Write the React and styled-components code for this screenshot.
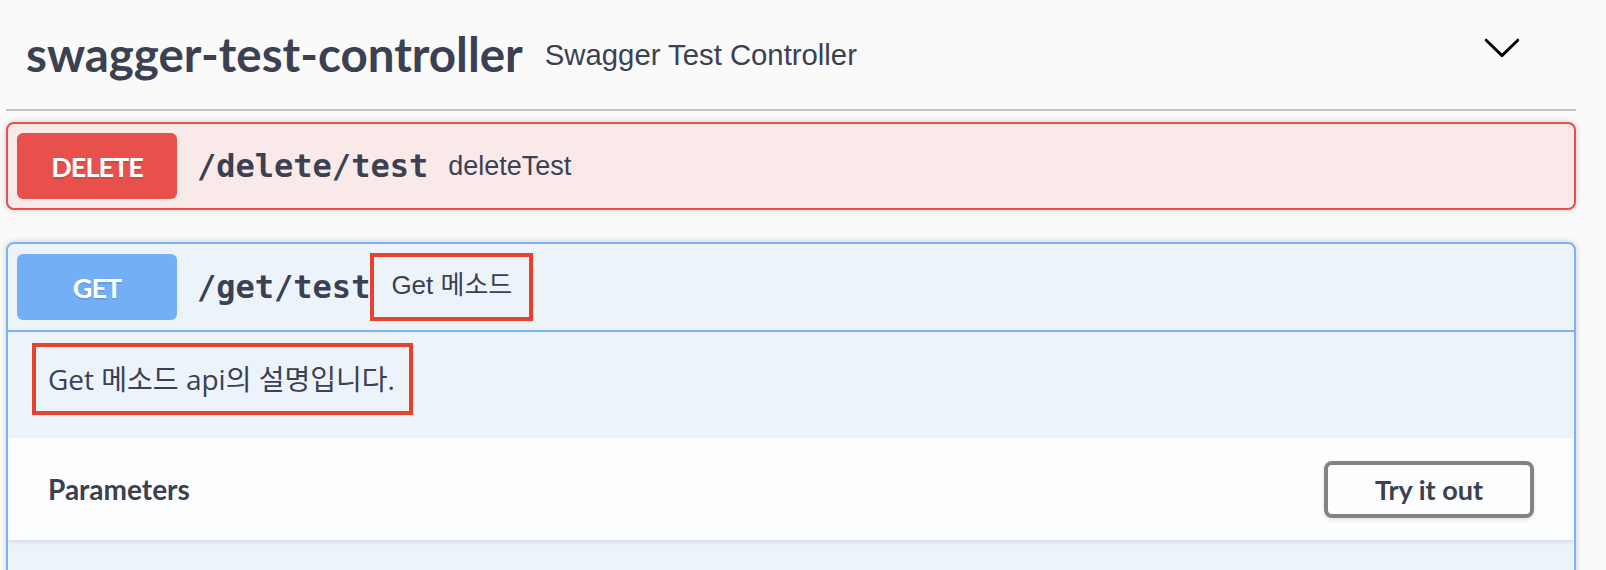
import React from 'react';
import styled, { createGlobalStyle } from 'styled-components';

const GlobalStyle = createGlobalStyle`
  html, body { margin: 0; padding: 0; background: #fafafa; }
  body {
    font-family: "Liberation Sans", "Noto Sans CJK KR", sans-serif;
    color: #3b4151;
  }
  * { box-sizing: border-box; }
`;

const methods = {
  delete: { main: '#e8504b', bg: '#f9e9e9', border: '#e8504b' },
  get: { main: '#73aff7', bg: '#edf3fb', border: '#7cb3f4' },
};

const Page = styled.div`
  height: 570px;
  overflow: hidden;
  padding: 0 30px 0 6px;
`;

const TagHeader = styled.div`
  display: flex;
  align-items: center;
  padding: 25px 54px 26px 20px;
  border-bottom: 2px solid rgba(59, 65, 81, 0.3);
  margin-bottom: 11px;
`;

const TagName = styled.span`
  font-family: Lato, sans-serif;
  font-weight: 700;
  font-size: 47.5px;
  line-height: 58px;
  color: #3b4151;
`;

const TagDescription = styled.small`
  flex: 1;
  margin-left: 22px;
  margin-top: 2px;
  font-family: "Liberation Sans", sans-serif;
  font-size: 29.3px;
  color: #3b4151;
`;

const ExpandButton = styled.button`
  display: flex;
  width: 40px;
  height: 40px;
  padding: 0;
  margin-bottom: 14px;
  border: none;
  background: none;
`;

const Opblock = styled.div`
  border: 2px solid ${(p) => p.$border};
  border-radius: 8px;
  background: ${(p) => p.$bg};
  box-shadow: 0 0 6px rgba(0, 0, 0, 0.19);
  margin-bottom: 32px;
  overflow: hidden;
`;

const Summary = styled.div`
  display: flex;
  align-items: center;
  padding: 9px;
  border-bottom: ${(p) => (p.$open ? `2px solid ${p.$border}` : 'none')};
`;

const MethodBadge = styled.span`
  display: flex;
  align-items: center;
  justify-content: center;
  min-width: 160px;
  height: 66px;
  border-radius: 6px;
  background: ${(p) => p.$color};
  color: #fff;
  font-family: Lato, sans-serif;
  font-weight: 700;
  font-size: 27px;
  letter-spacing: -1px;
  text-shadow: 0 2px 0 rgba(0, 0, 0, 0.1);
`;

const Path = styled.span`
  padding: 0 ${(p) => (p.$tight ? '0' : '20px')} 0 20px;
  font-family: "DejaVu Sans Mono", monospace;
  font-weight: 700;
  font-size: 32px;
  color: #3b4151;
`;

const SummaryDescription = styled.span`
  font-family: "Liberation Sans", "Noto Sans CJK KR", sans-serif;
  font-size: ${(p) => p.$size || '27px'};
  color: #3b4151;
`;

const Highlight = styled.span`
  display: inline-block;
  border: 4px solid #e5432d;
  padding: ${(p) => p.$pad};
  line-height: ${(p) => p.$lh};
`;

const DescriptionWrapper = styled.div`
  padding: 11px 0 23px 24px;
`;

const DescriptionText = styled.p`
  margin: 0;
  font-family: "Open Sans", "Noto Sans CJK KR", sans-serif;
  font-size: 28px;
  color: #3b4151;
`;

const SectionHeader = styled.div`
  display: flex;
  align-items: center;
  justify-content: space-between;
  height: 102px;
  padding: 0 40px;
  background: rgba(255, 255, 255, 0.8);
  box-shadow: 0 2px 4px rgba(0, 0, 0, 0.1);
`;

const SectionTitle = styled.h4`
  margin: 0;
  font-family: Lato, sans-serif;
  font-weight: 700;
  font-size: 28px;
  color: #3b4151;
`;

const TryButton = styled.button`
  padding: 10px 47px;
  border: 4px solid #828282;
  border-radius: 8px;
  background: transparent;
  box-shadow: 0 2px 4px rgba(0, 0, 0, 0.1);
  font-family: Lato, sans-serif;
  font-weight: 700;
  font-size: 27px;
  line-height: 29px;
  color: #3b4151;
`;

const SectionBody = styled.div`
  min-height: 120px;
`;

const Chevron = () => (
  <svg width="40" height="40" viewBox="0 0 20 20" aria-hidden="true">
    <path
      fill="#000"
      d="M17.418 6.109c.272-.268.709-.268.979 0s.271.701 0 .969l-7.908 7.83c-.27.268-.707.268-.979 0l-7.908-7.83c-.27-.268-.27-.701 0-.969.271-.268.709-.268.979 0L10 13.25l7.418-7.141z"
    />
  </svg>
);

export default function App() {
  const del = methods.delete;
  const get = methods.get;
  return (
    <>
      <GlobalStyle />
      <Page>
        <TagHeader>
          <TagName>swagger-test-controller</TagName>
          <TagDescription>Swagger Test Controller</TagDescription>
          <ExpandButton aria-label="collapse">
            <Chevron />
          </ExpandButton>
        </TagHeader>

        <Opblock $border={del.border} $bg={del.bg}>
          <Summary>
            <MethodBadge $color={del.main}>DELETE</MethodBadge>
            <Path>/delete/test</Path>
            <SummaryDescription>deleteTest</SummaryDescription>
          </Summary>
        </Opblock>

        <Opblock $border={get.border} $bg={get.bg}>
          <Summary $open $border={get.border}>
            <MethodBadge $color={get.main}>GET</MethodBadge>
            <Path $tight>/get/test</Path>
            <Highlight $pad="0 17px 0 17px" $lh="56px">
              <SummaryDescription $size="26px">Get 메소드</SummaryDescription>
            </Highlight>
          </Summary>
          <DescriptionWrapper>
            <Highlight $pad="12px 14px 12px 12px" $lh="40px">
              <DescriptionText>Get 메소드 api의 설명입니다.</DescriptionText>
            </Highlight>
          </DescriptionWrapper>
          <SectionHeader>
            <SectionTitle>Parameters</SectionTitle>
            <TryButton>Try it out</TryButton>
          </SectionHeader>
          <SectionBody />
        </Opblock>
      </Page>
    </>
  );
}
